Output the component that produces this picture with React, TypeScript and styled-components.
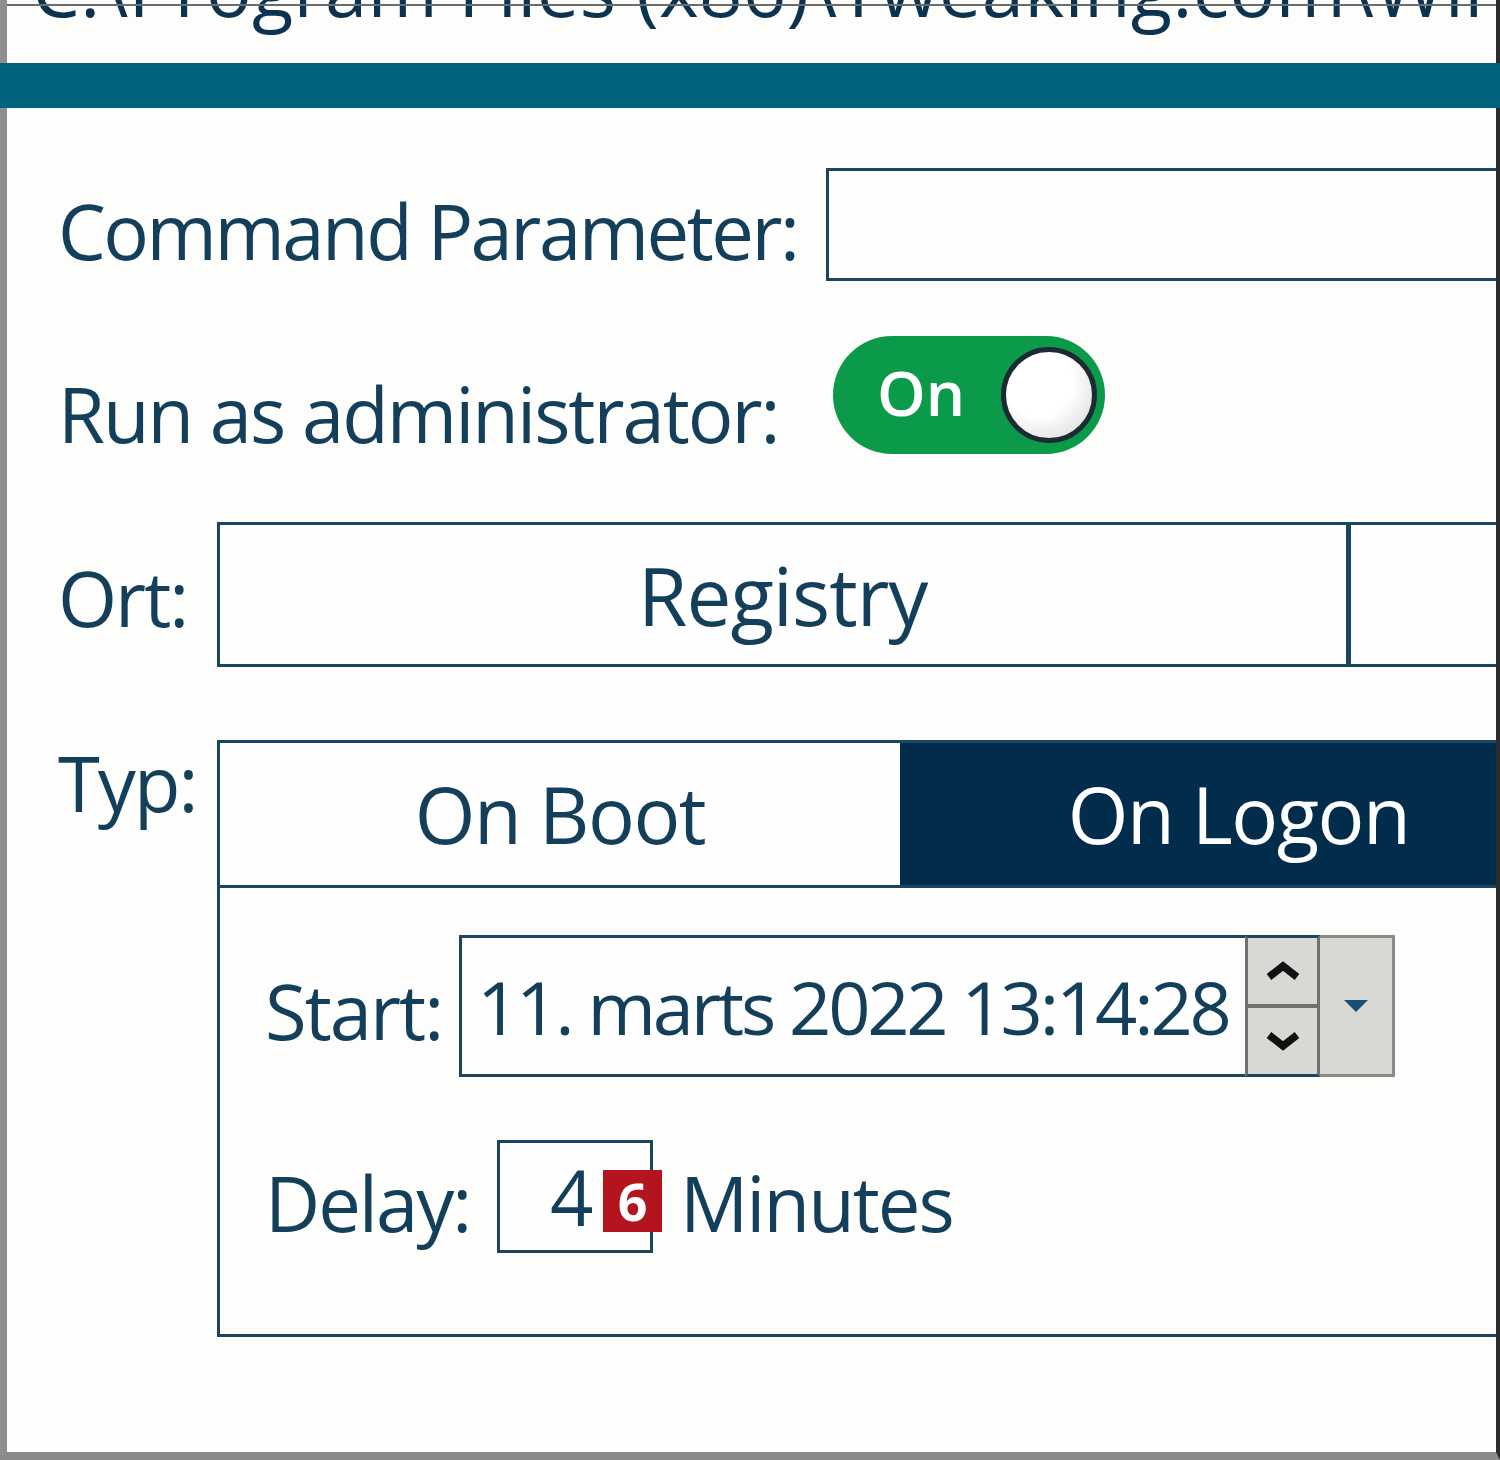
import styled, { createGlobalStyle } from 'styled-components';

const GlobalStyle = createGlobalStyle`
  html, body {
    margin: 0;
    padding: 0;
    background: #fdfdfb;
  }
  body {
    font-family: "Open Sans", "Noto Sans", sans-serif;
  }
`;

const ink = '#143f5b';
const line = '#1c4560';
const frame = '#8e8e8e';

const Window = styled.div`
  width: 1500px;
  height: 1460px;
  display: flex;
  flex-direction: column;
  overflow: hidden;
  background: #fdfdfb;
`;

const TitleArea = styled.div`
  position: relative;
  flex: none;
  height: 63px;
  overflow: hidden;
  border-left: 7px solid ${frame};
  border-right: 4px solid #2c2c2c;

  &::after {
    content: '';
    position: absolute;
    left: 0;
    right: 0;
    top: 4px;
    height: 2px;
    background: #6c6c6c;
  }
`;

const PathText = styled.div`
  margin-top: -50px;
  padding-left: 25px;
  font-size: 76px;
  line-height: 1;
  letter-spacing: 0.3px;
  white-space: nowrap;
  color: #0b3350;
`;

const TealBar = styled.div`
  flex: none;
  height: 45px;
  background: #02617c;
`;

const Content = styled.div`
  flex: 1;
  overflow: hidden;
  padding: 60px 0 0 51px;
  border-left: 7px solid ${frame};
  border-right: 4px solid #2c2c2c;
  border-bottom: 8px solid #8a8a8a;
  display: flex;
  flex-direction: column;
`;

const Row = styled.div<{ $gap?: number }>`
  display: flex;
  align-items: flex-start;
  margin-top: ${(p) => p.$gap ?? 0}px;
  flex: none;
`;

const Label = styled.div<{ $width: number; $drop: number; $tight?: boolean }>`
  flex: none;
  width: ${(p) => p.$width}px;
  margin-top: ${(p) => p.$drop}px;
  margin-bottom: ${(p) => -p.$drop}px;
  font-size: 76px;
  line-height: 1.2;
  letter-spacing: ${(p) => (p.$tight ? -2.5 : -2)}px;
  color: ${ink};
  white-space: nowrap;
`;

const TextBox = styled.div<{ $width: number; $height: number }>`
  flex: none;
  position: relative;
  box-sizing: border-box;
  width: ${(p) => p.$width}px;
  height: ${(p) => p.$height}px;
  border: 3px solid ${line};
  background: #fefefe;
`;

const Toggle = styled.div`
  flex: none;
  box-sizing: border-box;
  width: 272px;
  height: 118px;
  border-radius: 59px;
  background: #0b9a4a;
  display: flex;
  align-items: center;
  justify-content: space-between;
  padding: 0 8px 0 44px;
`;

const ToggleText = styled.span`
  font-size: 62px;
  font-weight: 600;
  color: #fff;
  line-height: 1;
  margin-top: -6px;
`;

const Knob = styled.span`
  box-sizing: border-box;
  width: 96px;
  height: 96px;
  border-radius: 50%;
  border: 5px solid #1c2a33;
  background: radial-gradient(circle at 38% 35%, #ffffff 45%, #e6e6e4 75%, #c9c9c7 100%);
`;

const Segmented = styled.div`
  flex: none;
  box-sizing: border-box;
  width: 2262px;
  height: 145px;
  display: flex;
  border: 3px solid ${line};
  background: #fefefe;
`;

const Segment = styled.div<{ $divider?: boolean }>`
  flex: 1;
  display: flex;
  align-items: center;
  justify-content: center;
  border-left: ${(p) => (p.$divider ? `5px solid ${line}` : 'none')};
  font-size: 80px;
  letter-spacing: -1px;
  color: ${ink};
`;

const TypeBlock = styled.div`
  flex: none;
  width: 1360px;
  display: flex;
  flex-direction: column;
`;

const TabHeader = styled.div`
  box-sizing: border-box;
  height: 148px;
  display: flex;
  border: 3px solid ${line};
`;

const Tab = styled.div<{ $active?: boolean }>`
  flex: none;
  width: ${(p) => (p.$active ? 677 : 680)}px;
  display: flex;
  align-items: center;
  justify-content: center;
  background: ${(p) => (p.$active ? '#022c4b' : '#fefefe')};
  color: ${(p) => (p.$active ? '#ffffff' : ink)};
  font-size: 78px;
  letter-spacing: -1.5px;
`;

const TabPanel = styled.div`
  box-sizing: border-box;
  border: 3px solid ${line};
  border-top: none;
  padding: 47px 0 81px 45px;
  display: flex;
  flex-direction: column;
`;

const DatePicker = styled.div`
  flex: none;
  width: 936px;
  height: 142px;
  display: flex;
  box-sizing: border-box;
`;

const DateValue = styled.div`
  flex: 1;
  min-width: 0;
  overflow: hidden;
  box-sizing: border-box;
  border: 3px solid ${line};
  border-right: none;
  background: #fefefe;
  display: flex;
  align-items: center;
  padding-left: 15px;
  font-size: 74px;
  letter-spacing: -3.2px;
  color: ${ink};
  white-space: nowrap;
`;

const Spin = styled.div`
  flex: none;
  width: 75px;
  box-sizing: border-box;
  display: flex;
  flex-direction: column;
  border-top: 3px solid ${line};
  border-bottom: 3px solid ${line};
  border-left: 3px solid #707070;
  border-right: 3px solid #707070;
  background: #707070;
  gap: 4px;
`;

const SpinButton = styled.div`
  flex: 1;
  background: #d8d8d4;
  display: flex;
  align-items: center;
  justify-content: center;
`;

const DropButton = styled.div`
  flex: none;
  width: 75px;
  box-sizing: border-box;
  border: 3px solid #8a8a88;
  border-left: none;
  background: #d8d8d4;
  display: flex;
  align-items: center;
  justify-content: center;
`;

const DelayValue = styled.div`
  padding-left: 50px;
  font-size: 76px;
  line-height: 107px;
  color: ${ink};
`;

const Badge = styled.span`
  position: absolute;
  left: 103px;
  top: 27px;
  width: 59px;
  height: 62px;
  background: #b3141d;
  color: #fff;
  font-size: 52px;
  font-weight: 700;
  line-height: 62px;
  text-align: center;
`;

const Unit = styled.div`
  margin: 17px 0 0 27px;
  font-size: 76px;
  line-height: 1.2;
  letter-spacing: -2px;
  color: ${ink};
`;

const Chevron = ({ up }: { up?: boolean }) => (
  <svg width="38" height="20" viewBox="0 0 38 20">
    <polyline
      points={up ? '5,16 19,5 33,16' : '5,4 19,15 33,4'}
      fill="none"
      stroke="#111"
      strokeWidth="7.5"
      strokeLinejoin="miter"
    />
  </svg>
);

export default function App() {
  return (
    <>
      <GlobalStyle />
      <Window>
        <TitleArea>
          <PathText>C:\Program Files (x86)\Tweaking.com\Windows Repair</PathText>
        </TitleArea>
        <TealBar />
        <Content>
          <Row>
            <Label $width={768} $drop={17} $tight>Command Parameter:</Label>
            <TextBox $width={1000} $height={113} />
          </Row>
          <Row $gap={55}>
            <Label $width={775} $drop={32}>Run as administrator:</Label>
            <Toggle>
              <ToggleText>On</ToggleText>
              <Knob />
            </Toggle>
          </Row>
          <Row $gap={68}>
            <Label $width={159} $drop={30}>Ort:</Label>
            <Segmented>
              <Segment>Registry</Segment>
              <Segment $divider />
            </Segmented>
          </Row>
          <Row $gap={73}>
            <Label $width={159} $drop={-3}>Typ:</Label>
            <TypeBlock>
              <TabHeader>
                <Tab>On Boot</Tab>
                <Tab $active>On Logon</Tab>
              </TabHeader>
              <TabPanel>
                <Row>
                  <Label $width={194} $drop={30}>Start:</Label>
                  <DatePicker>
                    <DateValue>11. marts 2022 13:14:28</DateValue>
                    <Spin>
                      <SpinButton>
                        <Chevron up />
                      </SpinButton>
                      <SpinButton>
                        <Chevron />
                      </SpinButton>
                    </Spin>
                    <DropButton>
                      <svg width="28" height="16" viewBox="0 0 28 16">
                        <polygon points="2,2 26,2 14,14" fill="#1b4f72" />
                      </svg>
                    </DropButton>
                  </DatePicker>
                </Row>
                <Row $gap={63}>
                  <Label $width={232} $drop={17}>Delay:</Label>
                  <TextBox $width={156} $height={113}>
                    <DelayValue>4</DelayValue>
                    <Badge>6</Badge>
                  </TextBox>
                  <Unit>Minutes</Unit>
                </Row>
              </TabPanel>
            </TypeBlock>
          </Row>
        </Content>
      </Window>
    </>
  );
}
